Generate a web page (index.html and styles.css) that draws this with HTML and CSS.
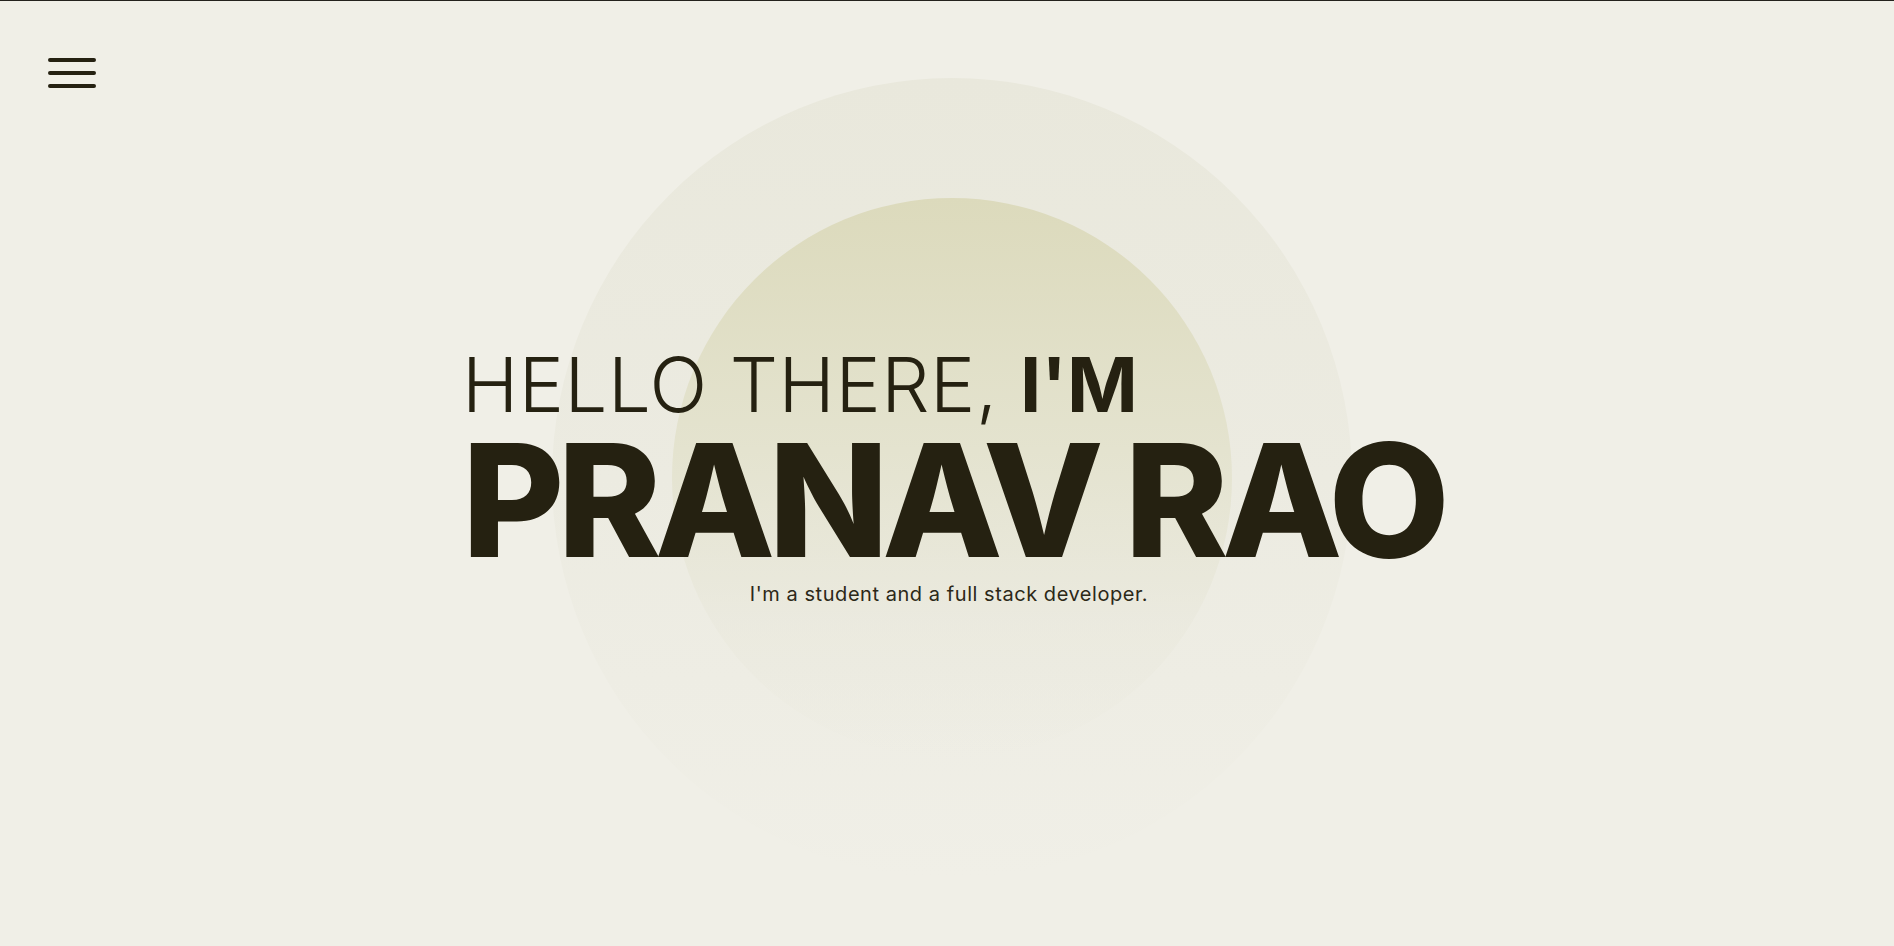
FILE: index.html
```html
<!DOCTYPE html>
<html lang="en">
<head>
<meta charset="utf-8">
<title>Pranav Rao</title>
<link rel="stylesheet" href="styles.css">
</head>
<body>
<header class="topbar">
  <button class="menu-btn" aria-label="Menu">
    <svg width="52" height="34" viewBox="0 0 52 34">
      <path d="M4 3H48M4 16H48M4 29H48" stroke="#252111" stroke-width="4" stroke-linecap="round" fill="none"/>
    </svg>
  </button>
</header>
<main class="hero">
  <div class="circle circle-outer"></div>
  <div class="circle circle-inner"></div>
  <div class="intro">
    <h2 class="hello">HELLO THERE, <strong>I'M</strong></h2>
    <h1 class="name">PRANAV RAO</h1>
    <p class="tagline">I'm a student and a full stack developer.</p>
  </div>
</main>
</body>
</html>
```
FILE: styles.css
```css
* { box-sizing: border-box; }
html, body { margin: 0; padding: 0; }
body {
  background: #f0efe7;
  color: #252111;
  font-family: "Inter", "Lato", sans-serif;
  height: 946px;
  overflow: hidden;
  border-top: 1px solid #24221d;
  position: relative;
}
.topbar {
  position: absolute;
  top: 0;
  left: 0;
  padding: 56px 0 0 46px;
  z-index: 2;
}
.menu-btn {
  background: none;
  border: 0;
  padding: 0;
  display: block;
  cursor: pointer;
}
.menu-btn svg { display: block; }
.hero {
  position: relative;
  height: 945px;
  display: flex;
  align-items: center;
  justify-content: center;
  padding: 7px 0 0 11px;
}
.circle {
  position: absolute;
  border-radius: 50%;
  left: 50%;
  top: 50%;
}
.circle-outer {
  width: 800px;
  height: 800px;
  margin: -396px 0 0 -395px;
  background: linear-gradient(180deg, #e9e8dc 0%, #ecebe1 50%, rgba(240,239,231,0) 100%);
}
.circle-inner {
  width: 560px;
  height: 560px;
  margin: -276px 0 0 -275px;
  background: linear-gradient(180deg, #dcdabc 0%, #e4e3cf 45%, rgba(233,232,220,0.6) 75%, rgba(236,235,226,0) 100%);
}
.intro {
  position: relative;
  z-index: 1;
  display: flex;
  flex-direction: column;
  align-items: flex-start;
}
.hello {
  margin: 0;
  font-size: 76px;
  line-height: 1;
  font-weight: 300;
  letter-spacing: 0.6px;
}
.hello strong { font-weight: 700; letter-spacing: 0; }
.name {
  margin: 0;
  font-size: 157px;
  line-height: 1;
  font-weight: 800;
  letter-spacing: -6.8px;
}
.tagline {
  margin: 0 7px 0 0;
  align-self: center;
  font-size: 20px;
  line-height: 30px;
  font-weight: 400;
  letter-spacing: 0.55px;
  color: #2c2818;
}
```
